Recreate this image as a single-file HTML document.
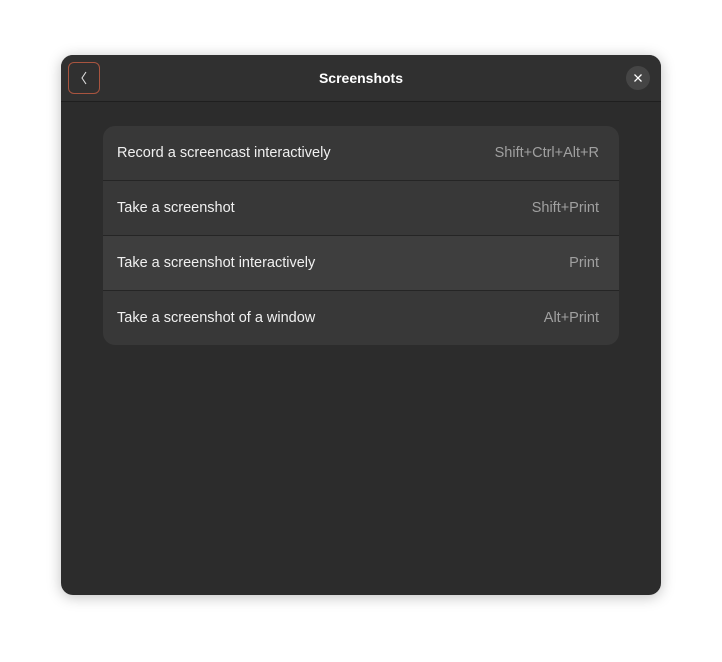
<!DOCTYPE html>
<html><head><style>
body{margin:0;width:722px;height:662px;background:#fff;font-family:"Liberation Sans",sans-serif;position:relative;overflow:hidden}
.win{position:absolute;left:61px;top:55px;width:600px;height:540px;background:#2c2c2c;border-radius:12px;box-shadow:0 2px 14px rgba(0,0,0,.25);overflow:hidden}
.hdr{position:absolute;left:0;top:0;width:600px;height:46px;background:#303030;border-bottom:1px solid #1f1f1f}
.title{position:absolute;left:0;right:0;top:15px;text-align:center;color:#fff;font-weight:bold;font-size:14px}
.back{position:absolute;left:7px;top:7px;width:30px;height:30px;border:1.5px solid #a8543f;border-radius:6px}
.close{position:absolute;left:565px;top:11px;width:24px;height:24px;border-radius:50%;background:#454545}
.card{position:absolute;left:42px;top:71px;width:516px;height:219px;background:#383838;border-radius:12px;overflow:hidden}
.row{height:54px;border-bottom:1px solid #252525;position:relative;color:#f0f0f0;font-size:14.5px}
.row:last-child{border-bottom:none}
.row span{position:absolute;top:19px}
.l{left:14px}.r{right:20px;color:#a0a0a0}
</style></head><body>
<div class="win">
<div class="hdr">
<div class="back"><svg width="30" height="30"><path d="M17 9 L13 15 L17 21" stroke="#ddd" stroke-width="1.1" fill="none"/></svg></div>
<div class="title">Screenshots</div>
<div class="close"><svg width="24" height="24"><path d="M8.5 8.5L15.5 15.5M15.5 8.5L8.5 15.5" stroke="#fff" stroke-width="1.3"/></svg></div>
</div>
<div class="card">
<div class="row"><span class="l">Record a screencast interactively</span><span class="r">Shift+Ctrl+Alt+R</span></div>
<div class="row"><span class="l">Take a screenshot</span><span class="r">Shift+Print</span></div>
<div class="row" style="background:#3e3e3e"><span class="l">Take a screenshot interactively</span><span class="r">Print</span></div>
<div class="row"><span class="l">Take a screenshot of a window</span><span class="r">Alt+Print</span></div>
</div>
</div>
</body></html>
